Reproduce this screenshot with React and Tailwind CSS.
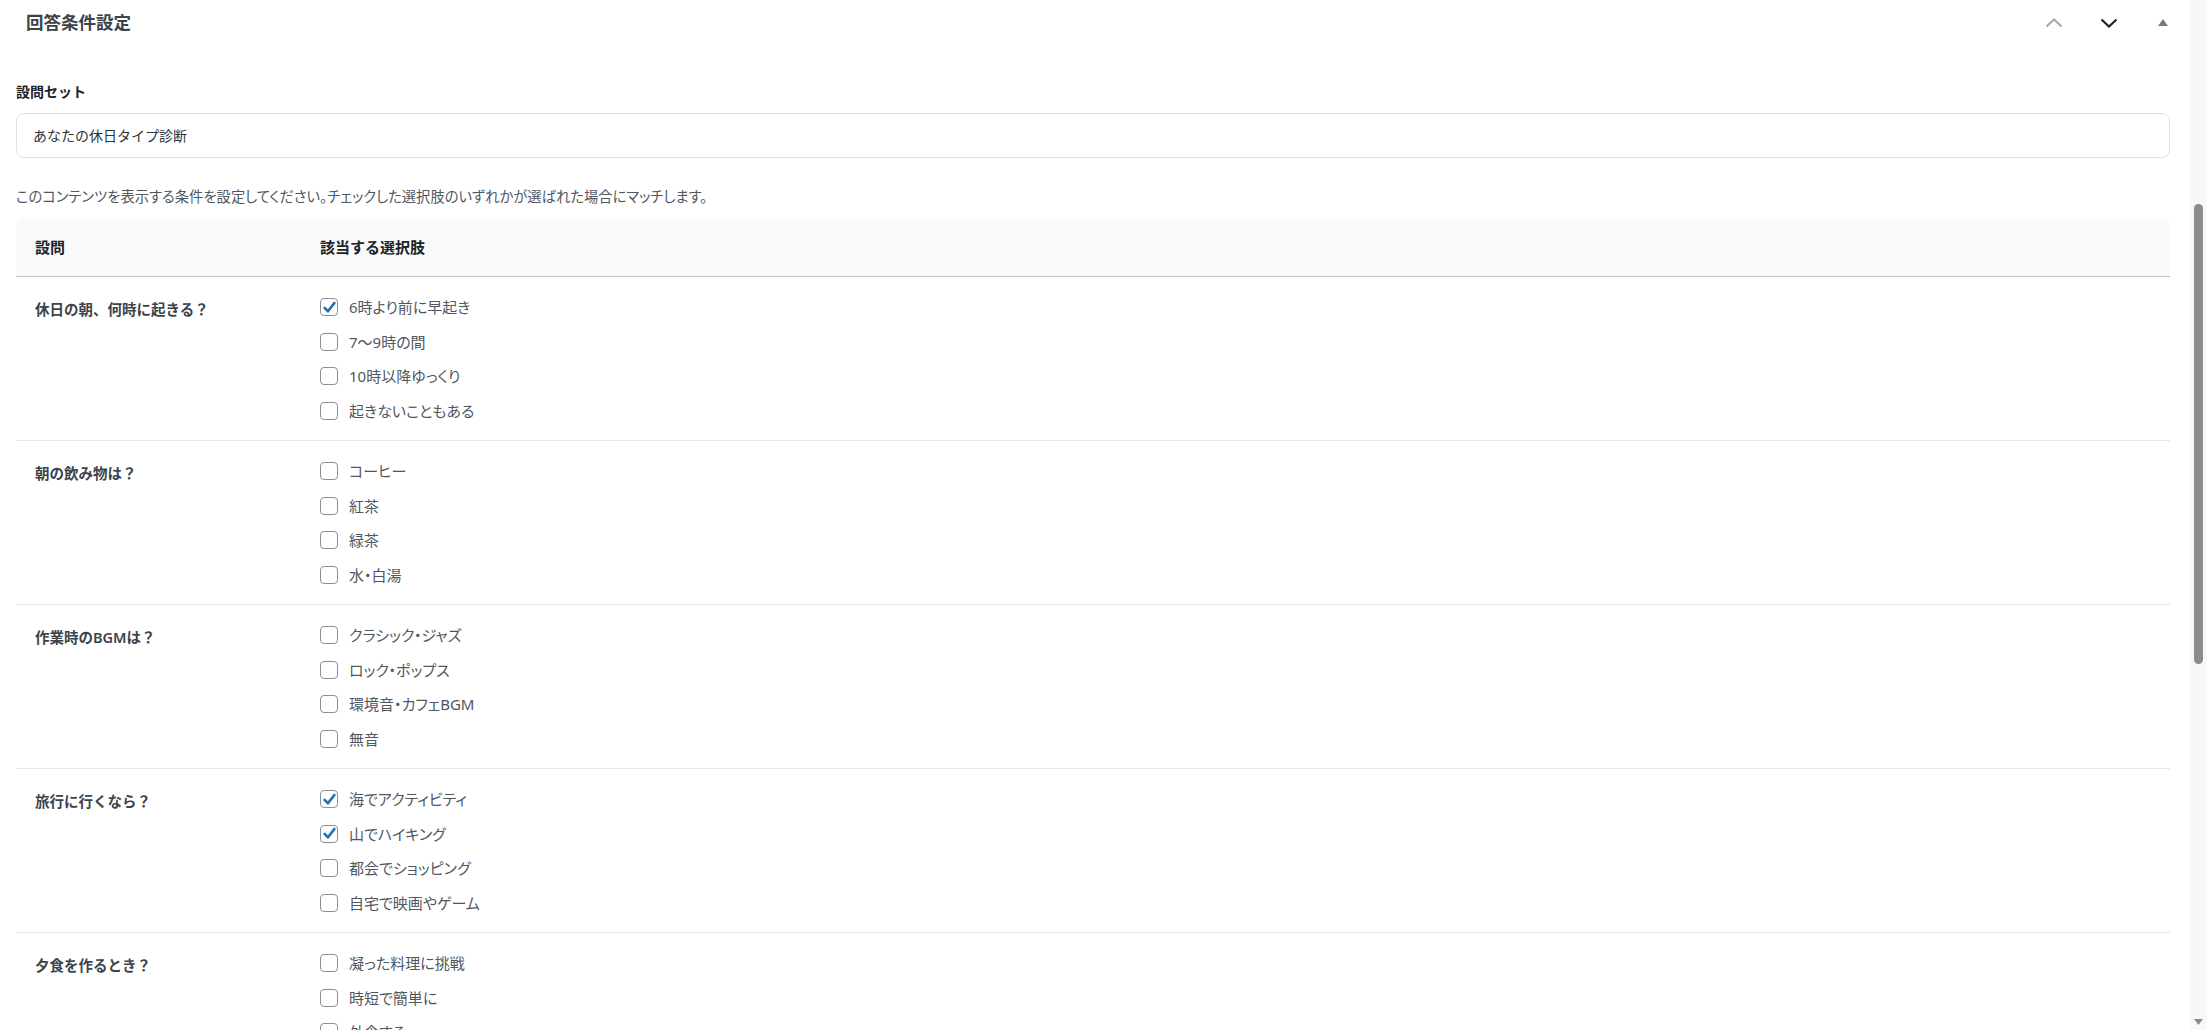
import React from "react";

const rows = [
  { q: "休日の朝、何時に起きる？", opts: [["6時より前に早起き", true], ["7〜9時の間", false], ["10時以降ゆっくり", false], ["起きないこともある", false]] },
  { q: "朝の飲み物は？", opts: [["コーヒー", false], ["紅茶", false], ["緑茶", false], ["水・白湯", false]] },
  { q: "作業時のBGMは？", opts: [["クラシック・ジャズ", false], ["ロック・ポップス", false], ["環境音・カフェBGM", false], ["無音", false]] },
  { q: "旅行に行くなら？", opts: [["海でアクティビティ", true], ["山でハイキング", true], ["都会でショッピング", false], ["自宅で映画やゲーム", false]] },
  { q: "夕食を作るとき？", opts: [["凝った料理に挑戦", false], ["時短で簡単に", false], ["外食する", false], ["デリバリーを頼む", false]] },
];

function Checkbox({ checked }) {
  return (
    <span className="flex h-[18px] w-[18px] shrink-0 items-center justify-center rounded-[4px] border border-[#8c8f94] bg-white">
      {checked && (
        <svg width="15" height="15" viewBox="0 0 20 20">
          <path d="M3.5 10.5 L8 15 L16.5 4" fill="none" stroke="#2271b1" strokeWidth="3.6" strokeLinecap="round" strokeLinejoin="round" />
        </svg>
      )}
    </span>
  );
}

export default function App() {
  return (
    <div className="flex h-screen overflow-hidden bg-white font-['Noto_Sans','Noto_Sans_CJK_JP',sans-serif]">
      <div className="min-w-0 flex-1">
        <div className="flex h-[45px] items-center justify-between pl-[26px]">
          <h2 className="text-[17.5px] font-semibold leading-none text-[#3c434a]">回答条件設定</h2>
          <div className="flex h-full items-center">
            <button className="flex h-full w-[55px] items-center justify-center">
              <svg width="18" height="10" viewBox="0 0 18 10">
                <path d="M1.5 8.5 L9 1.5 L16.5 8.5" fill="none" stroke="#a7aaad" strokeWidth="2.2" />
              </svg>
            </button>
            <button className="flex h-full w-[55px] items-center justify-center">
              <svg width="18" height="10" viewBox="0 0 18 10">
                <path d="M1.5 1.5 L9 8.5 L16.5 1.5" fill="none" stroke="#1d2327" strokeWidth="2.2" />
              </svg>
            </button>
            <button className="flex h-full w-[54px] items-center justify-center">
              <svg width="10" height="7" viewBox="0 0 10 7">
                <path d="M0 7 L5 0 L10 7 Z" fill="#787c82" />
              </svg>
            </button>
          </div>
        </div>

        <div className="pl-4 pr-5">
          <div className="mt-[37px] text-sm font-semibold leading-[20px] text-[#1d2327]">設問セット</div>
          <div className="mt-[11px] flex h-[45px] items-center rounded-lg border border-[#dde1ea] px-4 text-sm text-[#2c3338]">
            あなたの休日タイプ診断
          </div>
          <p className="mt-[29px] text-[14.3px] leading-[20px] text-[#50575e] [font-feature-settings:'palt']">
            このコンテンツを表示する条件を設定してください。チェックした選択肢のいずれかが選ばれた場合にマッチします。
          </p>

          <div className="mt-[12px]">
            <div className="flex h-[58px] items-center rounded-t-lg border-b border-[#c3c4c7] bg-[#f8f9fa] text-[15px] font-semibold text-[#1d2327]">
              <div className="w-[304px] pl-[19px]">設問</div>
              <div>該当する選択肢</div>
            </div>
            {rows.map((r, i) => (
              <div key={i} className="flex border-b border-[#e2e6ed]">
                <div className="w-[304px] shrink-0 pl-[19px] pt-[22px] text-[14.5px] font-semibold leading-[20px] text-[#3c434a]">
                  {r.q}
                </div>
                <div className="flex flex-col pt-[13px] pb-[12px]">
                  {r.opts.map(([label, checked], j) => (
                    <label key={j} className="flex h-[34.5px] items-center gap-[11px] text-[15px] text-[#50575e] [font-feature-settings:'palt']">
                      <Checkbox checked={checked} />
                      <span>{label}</span>
                    </label>
                  ))}
                </div>
              </div>
            ))}
          </div>
        </div>
      </div>

      <div className="flex w-[17px] shrink-0 flex-col items-center bg-[#f8f8f8]">
        <div className="mt-[204px] h-[460px] w-[9px] rounded-full bg-[#8b8b8b]" />
        <svg className="mt-auto mb-[5px]" width="9" height="6" viewBox="0 0 9 6">
          <path d="M0 0 L9 0 L4.5 6 Z" fill="#8b8b8b" />
        </svg>
      </div>
    </div>
  );
}
